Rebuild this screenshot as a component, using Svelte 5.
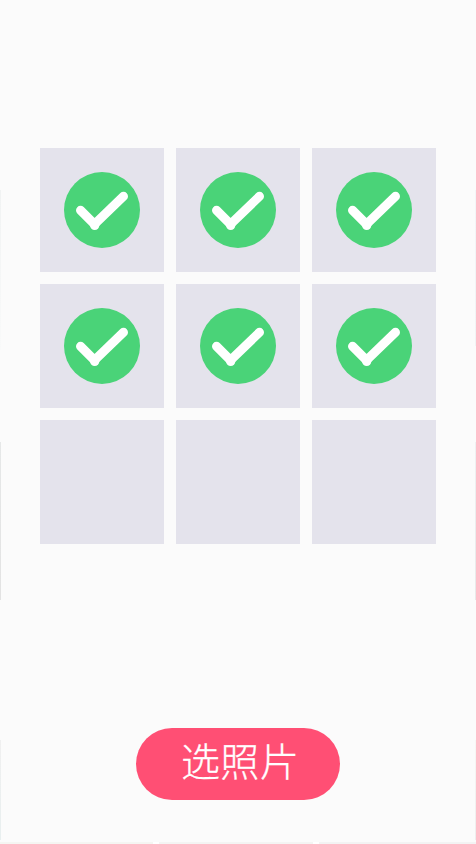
<script>
  const photos = [true, true, true, true, true, true, false, false, false];
</script>

<main>
  <div class="grid">
    {#each photos as selected}
      <div class="tile">
        {#if selected}
          <svg width="76" height="76" viewBox="0 0 76 76" aria-hidden="true">
            <circle cx="38" cy="38" r="38" fill="#4ad378" />
            <path d="M16.5 38.3 30.5 52.2 59.5 24.3" fill="none" stroke="#fff" stroke-width="9" stroke-linecap="round" stroke-linejoin="round" />
            <circle cx="30.7" cy="53.4" r="4.6" fill="#fff" />
          </svg>
        {/if}
      </div>
    {/each}
  </div>
  <button>选照片</button>
</main>

<style>
  :global(body) {
    background: #fbfbfb;
  }
  main {
    box-sizing: border-box;
    width: 476px;
    height: 844px;
    padding: 148px 40px 44px;
    display: flex;
    flex-direction: column;
    justify-content: space-between;
    align-items: center;
    background:
      linear-gradient(#e6e8e8, #e3e3e3) 0 442px / 1px 158px no-repeat,
      linear-gradient(#f1f3f3, #f9fafa) 0 190px / 1px 160px no-repeat,
      linear-gradient(#f0f0f0, #e8efef) 0 740px / 1px 100px no-repeat,
      linear-gradient(#f3f6f8, #f1f4f5) 475px 190px / 1px 156px no-repeat,
      linear-gradient(#eff2f3, #e8e9e9) 475px 442px / 1px 158px no-repeat,
      linear-gradient(#f7f7f5, #eeeeee) 475px 740px / 1px 100px no-repeat,
      linear-gradient(90deg, #f5f5f2 0 153px, #fff 153px 159px, #f4f4f3 159px 313px, #fff 313px 319px, #f3f3f3 319px) 0 842px / 476px 2px no-repeat,
      #fbfbfb;
  }
  .grid {
    display: grid;
    grid-template-columns: repeat(3, 124px);
    grid-auto-rows: 124px;
    gap: 12px;
  }
  .tile {
    display: flex;
    align-items: center;
    justify-content: center;
    background: #e4e3ec;
  }
  svg {
    display: block;
  }
  button {
    width: 204px;
    height: 72px;
    padding: 0 0 10px 4px;
    border: 0;
    border-radius: 36px;
    background: #ff4f74;
    color: #fff;
    font: 300 39px/62px "Noto Sans CJK SC", sans-serif;
    letter-spacing: 0.4px;
    -webkit-text-stroke: 0.3px #fff;
  }
</style>
